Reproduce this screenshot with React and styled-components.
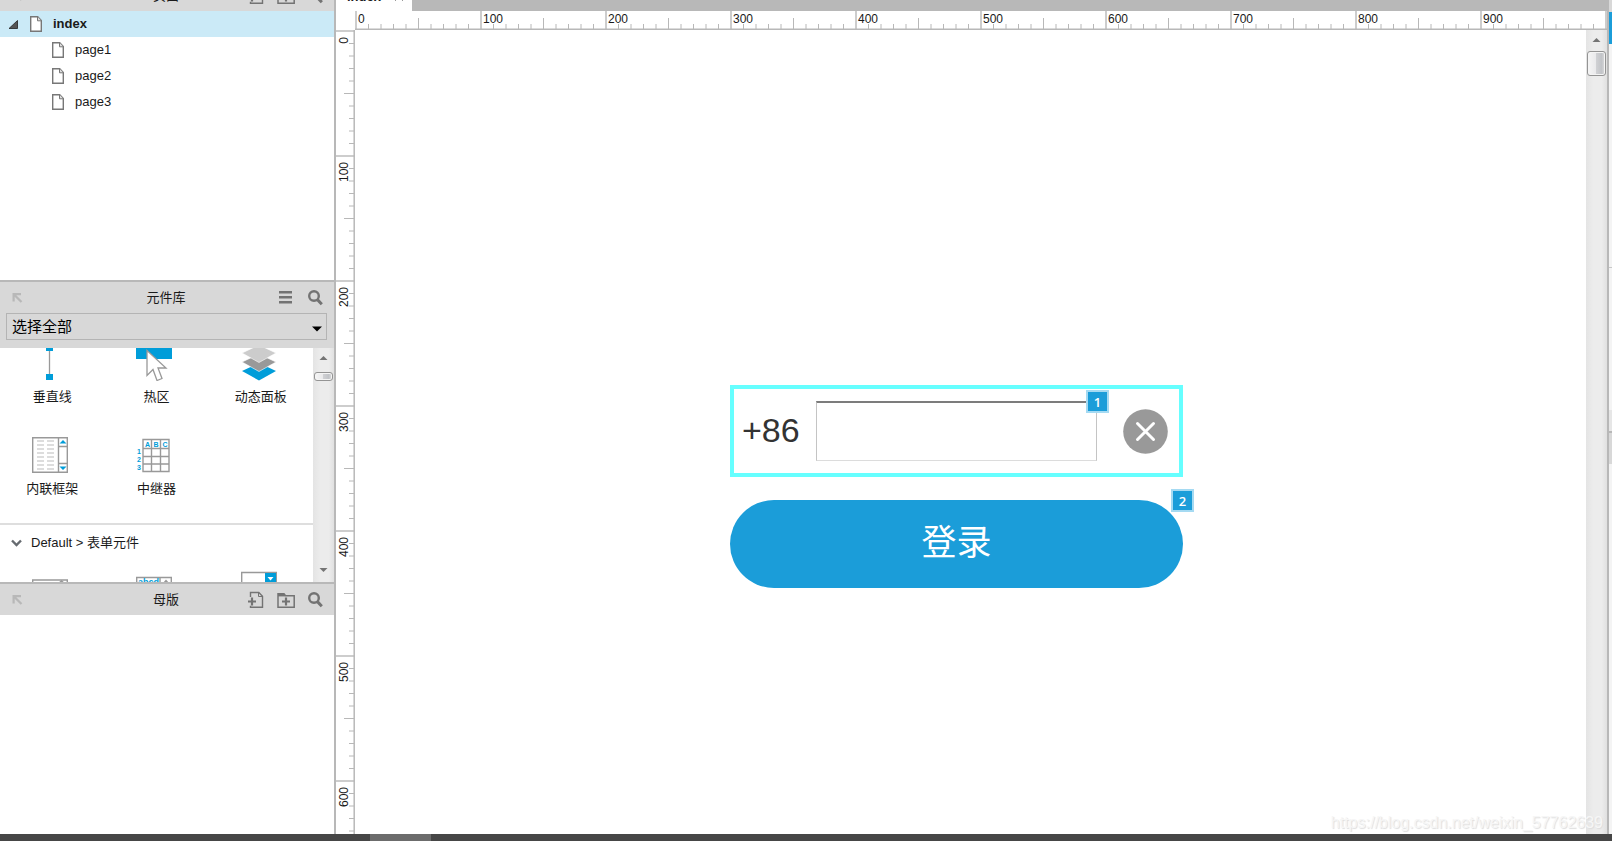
import React, { useState } from 'react';
import styled, { createGlobalStyle } from 'styled-components';

const GlobalStyle = createGlobalStyle`
  * {
    box-sizing: border-box;
  }
  body {
    margin: 0;
    overflow: hidden;
    background: #fff;
    color: #1a1a1a;
    font: 13px/18px 'Liberation Sans', 'Noto Sans CJK SC', sans-serif;
  }
  button, input, select {
    font: inherit;
    color: inherit;
  }
  button {
    padding: 0;
    border: 0;
    background: none;
  }
  svg {
    display: block;
    flex: none;
  }
`;

const Page = styled.div`
  position: relative;
  display: flex;
  flex-direction: column;
  height: 100vh;
  overflow: hidden;
`;

const Main = styled.main`
  display: flex;
  flex: 1;
  min-height: 0;
`;

const Sidebar = styled.aside`
  display: flex;
  flex-direction: column;
  flex: none;
  width: 336px;
  border-right: 2px solid #b8b8b8;
`;

const Panel = styled.section`
  display: flex;
  flex-direction: column;
  flex: ${(p) => (p.$height ? 'none' : '1')};
  height: ${(p) => (p.$height ? `${p.$height}px` : 'auto')};
  min-height: 0;
  overflow: hidden;
  border-bottom: ${(p) => (p.$height ? '2px solid #b8b8b8' : '0')};
`;

const PanelHeader = styled.header`
  display: grid;
  grid-template-columns: 1fr auto 1fr;
  align-items: center;
  flex: none;
  height: 31px;
  margin-top: ${(p) => (p.$scrolled ? '-20px' : '0')};
  padding: 0 11px;
  background: #d8d8d8;
`;

const PanelTitle = styled.h2`
  margin: 0;
  padding-right: 2px;
  font-size: 13px;
  font-weight: 400;
`;

const HeaderTools = styled.div`
  display: flex;
  justify-content: flex-end;
  gap: 13px;
`;

const Tree = styled.ul`
  margin: 0;
  padding: 0;
  list-style: none;
`;

const TreeRow = styled.li`
  display: flex;
  align-items: center;
  gap: 11px;
  height: 26px;
  padding-left: ${(p) => (p.$root ? '8px' : '52px')};
  background: ${(p) => (p.$root ? '#cbeaf7' : '#fff')};
  font-weight: ${(p) => (p.$root ? '700' : '400')};
`;

const SelectBar = styled.div`
  position: relative;
  display: flex;
  align-items: flex-start;
  flex: none;
  height: 35px;
  padding: 0 7px 0 6px;
  background: #d8d8d8;
`;

const LibrarySelect = styled.select`
  flex: 1;
  height: 27px;
  padding: 0 5px;
  border: 1px solid #b4b4b4;
  border-radius: 0;
  background: #d8d8d8;
  color: #000;
  font-size: 15px;
  appearance: none;
`;

const SelectArrow = styled.svg`
  position: absolute;
  right: 12px;
  top: 13px;
  pointer-events: none;
`;

const LibraryBody = styled.div`
  display: flex;
  flex: 1;
  min-height: 0;
`;

const LibraryList = styled.div`
  flex: 1;
  overflow: hidden;
`;

const Tiles = styled.div`
  display: grid;
  grid-template-columns: repeat(3, 1fr);
  margin-top: ${(p) => (p.$scrolled ? '-11px' : '0')};
`;

const Tile = styled.div`
  display: flex;
  flex-direction: column;
  align-items: center;
  gap: 7px;
  height: 92px;
  padding-top: 8px;
`;

const TileIcon = styled.svg`
  margin-right: 4px;
`;

const GroupToggle = styled.button`
  display: flex;
  align-items: center;
  gap: 9px;
  width: 100%;
  height: 38px;
  margin-top: 2px;
  padding-left: 11px;
  border-top: 2px solid #dedede;
`;

const ScrollTrack = styled.div`
  display: flex;
  flex-direction: column;
  align-items: center;
  flex: none;
  width: 21px;
  padding: 7px 0 8px;
  background: linear-gradient(90deg, #e4e4e4, #ececec 35%, #ececec 75%, #e0e0e0);
`;

const ScrollThumb = styled.div`
  width: 19px;
  height: ${(p) => p.$size}px;
  margin: ${(p) => p.$gap}px 0 auto;
  border: 1px solid #949494;
  border-radius: 3px;
  background: linear-gradient(90deg, #f5f5f5, #e9e9eb 48%, #cfd0d3 50%, #c2c4c8 80%, #dcdcdc);
  box-shadow: inset 0 0 0 1px #f4f4f4;
`;

const Workspace = styled.section`
  display: grid;
  grid-template-columns: 19px minmax(0, 1fr);
  grid-template-rows: 11px 19px minmax(0, 1fr);
  flex: 1;
  min-width: 0;
`;

const TabBar = styled.nav`
  grid-column: 1 / -1;
  display: flex;
  align-items: flex-end;
  justify-content: space-between;
  overflow: hidden;
  background: #b8b8b8;
`;

const Tab = styled.button`
  display: flex;
  align-items: center;
  gap: 14px;
  height: 32px;
  width: 76px;
  padding: 4px 0 0 11px;
  background: #fff;
  font-weight: 700;
`;

const TopRuler = styled.div`
  display: flex;
  overflow: hidden;
`;

const LeftRuler = styled.div`
  display: flex;
  flex-direction: column;
  overflow: hidden;
`;

const RulerStep = styled.div`
  display: grid;
  flex: none;
  width: ${(p) => (p.$vertical ? 19 : 125)}px;
  height: ${(p) => (p.$vertical ? 125 : 19)}px;

  > * {
    grid-area: 1 / 1;
  }
`;

const TopLabel = styled.span`
  padding: 1px 0 0 3px;
  font-size: 12px;
  line-height: 14px;
`;

const LeftLabel = styled.span`
  justify-self: start;
  align-self: start;
  margin: 7px 0 0 2px;
  font-size: 12px;
  line-height: 12px;
  writing-mode: vertical-rl;
  transform: rotate(180deg);
`;

const CanvasArea = styled.div`
  display: flex;
  min-height: 0;
`;

const Canvas = styled.div`
  position: relative;
  flex: 1;
  overflow: hidden;
  background: #fff;
`;

// Widgets live on a free canvas, so each one carries its own x/y.
const Widget = styled.div`
  position: absolute;
  left: ${(p) => p.$x}px;
  top: ${(p) => p.$y}px;
`;

const PhoneBox = styled.div`
  display: flex;
  align-items: center;
  width: 453px;
  height: 92px;
  padding-left: 8px;
  border: 4px solid #66ffff;
`;

const PhoneLabel = styled.label`
  width: 74px;
  padding-bottom: 3px;
  color: #333;
  font-size: 34px;
  line-height: 40px;
`;

const PhoneInput = styled.input`
  width: 281px;
  height: 60px;
  padding: 0 12px;
  border: 1px solid #c4c4c4;
  border-top: 2px solid #7c7c7c;
  border-bottom-color: #dcdcdc;
  border-radius: 0;
  font-size: 24px;
  outline: 0;
`;

const ClearButton = styled.button`
  margin-left: 26px;
`;

const LoginButton = styled.button`
  width: 453px;
  height: 88px;
  padding-bottom: 2px;
  border-radius: 44px;
  background: #1b9dd9;
  color: #fff;
  font-size: 35px;
`;

const NoteBadge = styled.span`
  display: flex;
  align-items: center;
  justify-content: center;
  width: 23px;
  height: 23px;
  border: 2px solid #a5daf2;
  background: #1b9dd9;
  color: #fff;
  font: 600 13px/16px 'Open Sans', 'Noto Sans', sans-serif;
`;

const RightDock = styled.aside`
  display: flex;
  flex-direction: column;
  flex: none;
  width: 5px;
  border-left: 2px solid #b8b8b8;
  background: #f4f4f4;
`;

const DockPart = styled.div`
  flex: none;
  height: ${(p) => p.$height}px;
  background: ${(p) => p.$color};
`;

const Taskbar = styled.footer`
  flex: none;
  height: 7px;
  padding-left: 370px;
  background: #464646;
`;

const TaskbarItem = styled.div`
  width: 61px;
  height: 7px;
  background: #6c6c6c;
`;

const Watermark = styled.div`
  position: absolute;
  right: 9px;
  bottom: 9px;
  color: #f6f6f6;
  font-size: 16px;
  line-height: 18px;
  text-shadow: 1px 1px 1px #ddd;
`;

const FileIcon = () => (
  <svg width="12" height="16" viewBox="0 0 12 16" fill="#fff" stroke="#777">
    <path d="M.7.8h7l3.6 3.8v10.6H.7z" strokeWidth="1.4" />
    <path d="M7.5.8v4h3.8" fill="#ddd" />
  </svg>
);

const DockArrow = () => (
  <svg width="12" height="12" viewBox="0 0 12 12" fill="none" stroke="#b8b8b8" strokeWidth="2.2">
    <path d="M2.600 9.500V2.100H10M3 2.500l7.500 7.500" />
  </svg>
);

const SearchIcon = () => (
  <svg width="15" height="16" viewBox="0 0 15 16" stroke="#737373" fill="none">
    <circle cx="6" cy="6" r="4.800" strokeWidth="2.400" />
    <path d="M9.400 9.600l4.400 4.600" strokeWidth="3" />
  </svg>
);

const MenuIcon = () => (
  <svg width="17" height="16" viewBox="0 0 17 16" fill="#737373">
    <path d="M1 1h13v2.500H1zM1 6h13v2.500H1zM1 11h13v2.500H1z" />
  </svg>
);

const AddPageIcon = () => (
  <svg width="16" height="18" viewBox="0 0 16 18" fill="none" stroke="#737373">
    <path d="M2.500 6V1.500h8.300l3.700 3.700v11H2.500v-1.500" strokeWidth="1.400" />
    <path d="M10.500 1.500v4h4" />
    <path d="M0 10.500h8M4 6.500v8" strokeWidth="2.200" />
  </svg>
);

const AddFolderIcon = () => (
  <svg width="18" height="18" viewBox="0 0 18 18" fill="none" stroke="#737373">
    <path d="M1 16.200V2.800h6l1.500 2h8.700v11.400z" strokeWidth="1.500" />
    <path d="M1 4.200h7" strokeWidth="2.400" />
    <path d="M5 10.500h8M9 6.500v8" strokeWidth="2.200" />
  </svg>
);

const Triangle = ({ down }) => (
  <svg width="9" height="7" viewBox="0 0 9 7">
    <path d={down ? 'M.5 1h8L4.500 5z' : 'M.5 5h8L4.500 1z'} fill="#747474" />
  </svg>
);

const ICONS = {
  line: (
    <>
      <path d="M17.500 3v30" stroke="#999" strokeWidth="1.300" />
      <path d="M14 0h7v6h-7zM14 29h7v6h-7z" fill="#009dd9" />
    </>
  ),
  hotspot: (
    <>
      <path d="M0 0h36v14H0z" fill="#009dd9" />
      <path
        d="M11 5.500v25l6-6 4 11 5-2-4-10.500h8z"
        fill="#fff"
        stroke="#999"
        strokeWidth="1.300"
      />
    </>
  ),
  panel: (
    <>
      <path d="M1 26l17-8 17 8-17 9.500z" fill="#009dd9" />
      <path d="M1 17l17-8 17 8-17 9.500z" fill="#999" stroke="#fff" strokeWidth=".6" />
      <path d="M1 8l17-8 17 8-17 9.500z" fill="#ccc" stroke="#fff" strokeWidth=".6" />
    </>
  ),
  frame: (
    <>
      <path d="M.7.7h34.600v34.600H.7zM26.500 1v34M26.500 9.500h8.500M26.500 26.500h8.500" fill="none" stroke="#999" strokeWidth="1.400" />
      {[4, 8, 12, 16, 20, 24, 28, 32].map((y) => (
        <path key={y} d={`M5 ${y}h7M15 ${y}h7`} stroke="#bbb" />
      ))}
      <path d="M27.500 6.500h7L31 3zM27.500 29.500h7L31 33z" fill="#009dd9" />
    </>
  ),
  repeater: (
    <g fontFamily="Liberation Sans" fontSize="7" fontWeight="700" fill="#009dd9">
      <path d="M7 2.500h26v32H7zM7 11.500h26M7 19.500h26M7 27h26M15.500 2.500v32M24.500 2.500v32" fill="none" stroke="#999" strokeWidth="1.400" />
      <text x="9" y="9.500">A</text>
      <text x="17.500" y="9.500">B</text>
      <text x="26.500" y="9.500">C</text>
      <text x="1" y="17">1</text>
      <text x="1" y="25">2</text>
      <text x="1" y="33">3</text>
    </g>
  ),
  listbox: (
    <>
      <path d="M.7 11h34.600v24H.7z" fill="#fff" stroke="#999" strokeWidth="1.400" />
      <path d="M26 14h7l-3.500-3z" fill="#999" />
    </>
  ),
  textarea: (
    <>
      <path d="M.7 8.500h34.600V35H.7zM24 8.500V35" fill="#fff" stroke="#999" strokeWidth="1.400" />
      <text x="2" y="16" fontFamily="Liberation Sans" fontSize="9" fontWeight="700" fill="#009dd9">abcd</text>
      <path d="M27 14h6l-3-3.500z" fill="#999" />
    </>
  ),
  droplist: (
    <>
      <path d="M.7 3.500h34.600v12H.7z" fill="#fff" stroke="#999" strokeWidth="1.400" />
      <path d="M24 4h11v11H24z" fill="#009dd9" />
      <path d="M26.500 8h6l-3 3.500z" fill="#fff" />
    </>
  ),
};

const LibraryTile = ({ icon, label }) => (
  <Tile>
    <TileIcon width="36" height="36" viewBox="0 0 36 36">{ICONS[icon]}</TileIcon>
    <span>{label}</span>
  </Tile>
);

const MINOR = [12.5, 25, 37.5, 50, 75, 87.5, 100, 112.5];
const TOP_TICKS = MINOR.map((x) => `M${x + 1} 13v5`).join('');
const LEFT_TICKS = MINOR.map((y) => `M13 ${y + 1}h5`).join('');

const TopTicks = () => (
  <svg width="125" height="19" viewBox="0 0 125 19" stroke="#b8b8b8">
    <path d={`M63.500 7v11${TOP_TICKS}`} />
    <path d="M1 0v19" strokeWidth="1.400" />
    <path d="M0 18.200h125" strokeWidth="1.500" />
  </svg>
);

const LeftTicks = () => (
  <svg width="19" height="125" viewBox="0 0 19 125" stroke="#b8b8b8">
    <path d={`M8 63.500h10${LEFT_TICKS}`} />
    <path d="M0 1h19" strokeWidth="1.400" />
    <path d="M18.200 0v125" strokeWidth="1.500" />
  </svg>
);

const steps = (count) => Array.from({ length: count }, (_, i) => i * 100);

const App = () => {
  const [phone, setPhone] = useState('');
  const changePhone = (e) => setPhone(e.target.value);

  return (
    <Page>
      <GlobalStyle />
      <Main>
        <Sidebar>
          <Panel $height={282}>
            <PanelHeader $scrolled>
              <DockArrow />
              <PanelTitle>页面</PanelTitle>
              <HeaderTools>
                <button aria-label="添加页面"><AddPageIcon /></button>
                <button aria-label="添加文件夹"><AddFolderIcon /></button>
                <button aria-label="搜索页面"><SearchIcon /></button>
              </HeaderTools>
            </PanelHeader>
            <Tree>
              <TreeRow $root>
                <svg width="11" height="9" viewBox="0 0 11 9">
                  <path d="M1 8.500L9.500.5v8z" fill="#555" stroke="#222" strokeWidth=".8" />
                </svg>
                <FileIcon />
                <span>index</span>
              </TreeRow>
              {['page1', 'page2', 'page3'].map((name) => (
                <TreeRow key={name}>
                  <FileIcon />
                  <span>{name}</span>
                </TreeRow>
              ))}
            </Tree>
          </Panel>

          <Panel $height={302}>
            <PanelHeader>
              <DockArrow />
              <PanelTitle>元件库</PanelTitle>
              <HeaderTools>
                <button aria-label="菜单"><MenuIcon /></button>
                <button aria-label="搜索元件"><SearchIcon /></button>
              </HeaderTools>
            </PanelHeader>
            <SelectBar>
              <LibrarySelect aria-label="元件库">
                <option>选择全部</option>
              </LibrarySelect>
              <SelectArrow width="10" height="6" viewBox="0 0 10 6">
                <path d="M0 .5h10L5 5.500z" />
              </SelectArrow>
            </SelectBar>
            <LibraryBody>
              <LibraryList>
                <Tiles $scrolled>
                  <LibraryTile icon="line" label="垂直线" />
                  <LibraryTile icon="hotspot" label="热区" />
                  <LibraryTile icon="panel" label="动态面板" />
                  <LibraryTile icon="frame" label="内联框架" />
                  <LibraryTile icon="repeater" label="中继器" />
                </Tiles>
                <GroupToggle>
                  <svg width="11" height="8" viewBox="0 0 11 8">
                    <path d="M1 1.500l4.500 4.500L10 1.500" fill="none" stroke="#666b70" strokeWidth="2.400" />
                  </svg>
                  <span>Default &gt; 表单元件</span>
                </GroupToggle>
                <Tiles>
                  <LibraryTile icon="listbox" />
                  <LibraryTile icon="textarea" />
                  <LibraryTile icon="droplist" />
                </Tiles>
              </LibraryList>
              <ScrollTrack>
                <Triangle />
                <ScrollThumb $size={9} $gap={10} />
                <Triangle down />
              </ScrollTrack>
            </LibraryBody>
          </Panel>

          <Panel>
            <PanelHeader>
              <DockArrow />
              <PanelTitle>母版</PanelTitle>
              <HeaderTools>
                <button aria-label="添加母版"><AddPageIcon /></button>
                <button aria-label="添加文件夹"><AddFolderIcon /></button>
                <button aria-label="搜索母版"><SearchIcon /></button>
              </HeaderTools>
            </PanelHeader>
          </Panel>
        </Sidebar>

        <Workspace>
          <TabBar>
            <Tab>
              <span>index</span>
              <svg width="8" height="8" viewBox="0 0 8 8">
                <path d="M0 0l8 8M8 0L0 8" stroke="#999" />
              </svg>
            </Tab>
          </TabBar>
          <div />
          <TopRuler>
            {steps(21).map((n) => (
              <RulerStep key={n}>
                <TopTicks />
                <TopLabel>{n}</TopLabel>
              </RulerStep>
            ))}
          </TopRuler>
          <LeftRuler>
            {steps(13).map((n) => (
              <RulerStep key={n} $vertical>
                <LeftTicks />
                <LeftLabel>{n}</LeftLabel>
              </RulerStep>
            ))}
          </LeftRuler>
          <CanvasArea>
            <Canvas>
              <Widget $x={375} $y={355}>
                <PhoneBox>
                  <PhoneLabel htmlFor="phone">+86</PhoneLabel>
                  <PhoneInput id="phone" type="tel" value={phone} onChange={changePhone} />
                  <ClearButton aria-label="清除" onClick={() => setPhone('')}>
                    <svg width="45" height="45" viewBox="0 0 45 45">
                      <circle cx="22.500" cy="22.500" r="22.300" fill="#999" />
                      <path d="M14.500 14.500l16 16M30.500 14.500l-16 16" stroke="#fff" strokeWidth="3" strokeLinecap="round" />
                    </svg>
                  </ClearButton>
                </PhoneBox>
              </Widget>
              <Widget $x={375} $y={470}>
                <LoginButton>登录</LoginButton>
              </Widget>
              <Widget $x={731} $y={360}>
                <NoteBadge>1</NoteBadge>
              </Widget>
              <Widget $x={816} $y={459}>
                <NoteBadge>2</NoteBadge>
              </Widget>
            </Canvas>
            <ScrollTrack>
              <Triangle />
              <ScrollThumb $size={25} $gap={7} />
            </ScrollTrack>
          </CanvasArea>
        </Workspace>

        <RightDock>
          <DockPart $height={12} $color="#d8d8d8" />
          <DockPart $height={32} $color="#1b9dd9" />
          <DockPart $height={223} $color="#f4f4f4" />
          <DockPart $height={1} $color="#c8c8c8" />
          <DockPart $height={142} $color="#f4f4f4" />
          <DockPart $height={21} $color="#e6e6e6" />
          <DockPart $height={2} $color="#b8b8b8" />
          <DockPart $height={31} $color="#d8d8d8" />
        </RightDock>
      </Main>
      <Taskbar>
        <TaskbarItem />
      </Taskbar>
      <Watermark>https://blog.csdn.net/weixin_57762639</Watermark>
    </Page>
  );
};

export default App;
